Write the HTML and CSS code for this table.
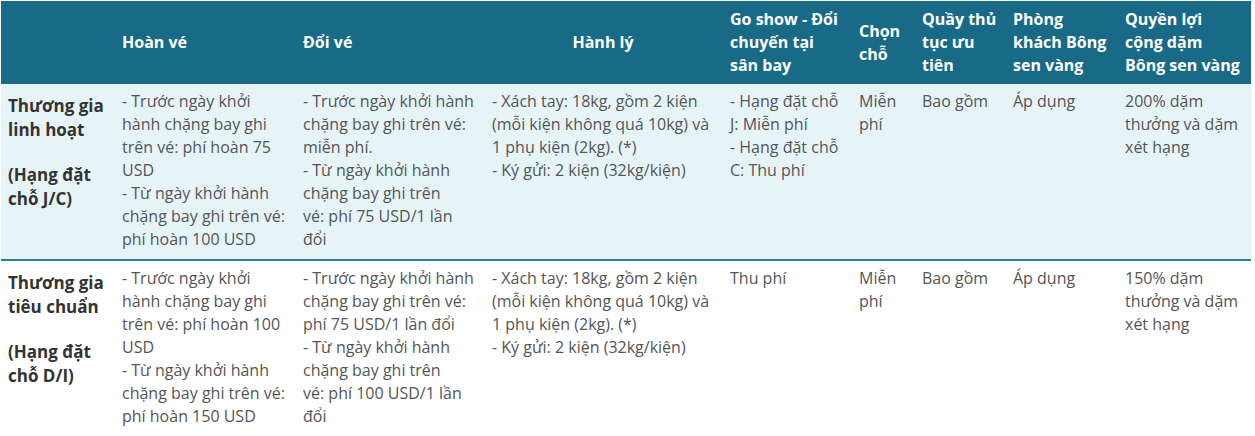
FILE: index.html
```
<!DOCTYPE html>
<html lang="vi">
<head>
<meta charset="utf-8">
<link rel="stylesheet" href="styles.css">
</head>
<body>
<table class="fare">
  <colgroup>
    <col class="c0"><col class="c1"><col class="c2"><col class="c3"><col class="c4"><col class="c5"><col class="c6"><col class="c7"><col class="c8">
  </colgroup>
  <thead>
    <tr>
      <th></th>
      <th>Hoàn vé</th>
      <th>Đổi vé</th>
      <th class="center">Hành lý</th>
      <th>Go show - Đổi chuyến tại sân bay</th>
      <th>Chọn chỗ</th>
      <th>Quầy thủ tục ưu tiên</th>
      <th>Phòng khách Bông sen vàng</th>
      <th>Quyền lợi cộng dặm Bông sen vàng</th>
    </tr>
  </thead>
  <tbody>
    <tr class="alt">
      <td class="label"><p>Thương gia linh hoạt</p><p class="sub">(Hạng đặt chỗ J/C)</p></td>
      <td>- Trước ngày khởi hành chặng bay ghi trên vé: phí hoàn 75 USD<br>- Từ ngày khởi hành chặng bay ghi trên vé: phí hoàn 100 USD</td>
      <td>- Trước ngày khởi hành chặng bay ghi trên vé: miễn phí.<br>- Từ ngày khởi hành chặng bay ghi trên vé:&nbsp;phí 75 USD/1 lần đổi</td>
      <td>- Xách tay: 18kg, gồm 2 kiện (mỗi kiện không quá 10kg) và 1 phụ kiện (2kg). (*)<br>- Ký gửi: 2 kiện (32kg/kiện)</td>
      <td>- Hạng đặt chỗ J: Miễn phí<br>- Hạng đặt chỗ C: Thu phí</td>
      <td>Miễn phí</td>
      <td>Bao gồm</td>
      <td>Áp dụng</td>
      <td>200% dặm thưởng và dặm xét hạng</td>
    </tr>
    <tr>
      <td class="label"><p>Thương gia tiêu chuẩn</p><p class="sub">(Hạng đặt chỗ D/I)</p></td>
      <td>- Trước ngày khởi hành chặng bay ghi trên vé: phí hoàn 100 USD<br>- Từ ngày khởi hành chặng bay ghi trên vé: phí hoàn 150 USD</td>
      <td>- Trước ngày khởi hành chặng bay ghi trên vé: phí 75 USD/1 lần đổi<br>- Từ ngày khởi hành chặng bay ghi trên vé:&nbsp;phí 100 USD/1 lần đổi</td>
      <td>- Xách tay: 18kg, gồm 2 kiện (mỗi kiện không quá 10kg) và 1 phụ kiện (2kg). (*)<br>- Ký gửi: 2 kiện (32kg/kiện)</td>
      <td>Thu phí</td>
      <td>Miễn phí</td>
      <td>Bao gồm</td>
      <td>Áp dụng</td>
      <td>150% dặm thưởng và dặm xét hạng</td>
    </tr>
  </tbody>
</table>
</body>
</html>
```
FILE: styles.css
```
html, body {
  margin: 0;
  padding: 0;
  background: #ffffff;
}
body {
  padding: 1px 0 0 1px;
  font-family: "Open Sans", "DejaVu Sans", sans-serif;
}
.fare {
  border-collapse: collapse;
  table-layout: fixed;
  width: 1250px;
}
.c0 { width: 113px; }
.c1 { width: 181px; }
.c2 { width: 189px; }
.c3 { width: 238px; }
.c4 { width: 129px; }
.c5 { width: 63px; }
.c6 { width: 91px; }
.c7 { width: 112px; }
.c8 { width: 134px; }

.fare thead th {
  background: #186a86;
  color: #ffffff;
  font-weight: 700;
  font-size: 16px;
  line-height: 23px;
  text-align: left;
  vertical-align: middle;
  padding: 7px 8px;
  height: 69px;
}
.fare thead th.center { text-align: center; }

.fare tbody td {
  vertical-align: top;
  color: #555555;
  font-size: 16px;
  line-height: 23px;
  padding: 6px 8px 8px 8px;
  border-bottom: 1px solid #dce9ee;
}
.fare tbody tr.alt td {
  background: #e6f4f8;
  border-bottom: 2px solid #2a8097;
}
.fare td.label {
  color: #333333;
  font-weight: 700;
  font-size: 17px;
  line-height: 24px;
  padding-top: 10px;
  padding-left: 7px;
}
.label p {
  margin: 0;
}
.label p.sub {
  margin-top: 21px;
}
```
